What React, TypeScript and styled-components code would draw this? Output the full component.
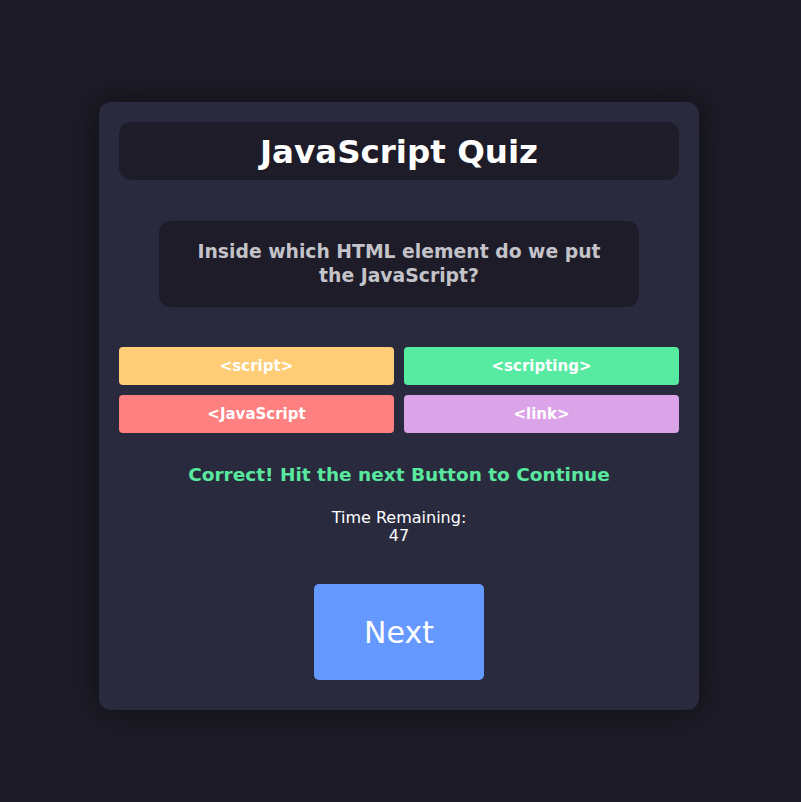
import React, { useState } from 'react';
import styled, { createGlobalStyle } from 'styled-components';

const GlobalStyle = createGlobalStyle`
  html, body {
    margin: 0;
    padding: 0;
    background: #1c1b26;
    font-family: "DejaVu Sans", Verdana, sans-serif;
  }
`;

const Page = styled.div`
  min-height: 802px;
  display: flex;
  justify-content: center;
  padding: 102px 3px 0 0;
  box-sizing: border-box;
`;

const Card = styled.div`
  width: 600px;
  height: 608px;
  box-sizing: border-box;
  padding: 20px 20px 30px;
  background: #292a3e;
  border-radius: 12px;
  box-shadow: 0 0 30px rgba(0, 0, 0, 0.45);
  display: flex;
  flex-direction: column;
  align-items: center;
`;

const TitleBox = styled.div`
  width: 100%;
  height: 58px;
  background: #1d1c28;
  border-radius: 12px;
  display: flex;
  align-items: center;
  justify-content: center;
`;

const Title = styled.h1`
  margin: 2px 0 0;
  font-size: 32.5px;
  font-weight: bold;
  color: #ffffff;
`;

const QuestionBox = styled.div`
  width: 480px;
  height: 86px;
  margin-top: 41px;
  box-sizing: border-box;
  padding: 0 20px;
  background: #1d1c28;
  border-radius: 12px;
  display: flex;
  align-items: center;
  justify-content: center;
  text-align: center;
  font-size: 18.8px;
  font-weight: bold;
  line-height: 24px;
  color: #c3c3c9;
`;

const Answers = styled.div`
  width: 100%;
  margin-top: 40px;
  display: grid;
  grid-template-columns: 1fr 1fr;
  gap: 10px;
`;

const AnswerButton = styled.button<{ $bg: string }>`
  height: 38px;
  border: none;
  border-radius: 4px;
  background: ${(p) => p.$bg};
  color: #ffffff;
  font-family: inherit;
  font-size: 15px;
  font-weight: bold;
  cursor: pointer;
`;

const Feedback = styled.p`
  margin: 31px 0 0;
  font-size: 18.5px;
  font-weight: bold;
  color: #58e89e;
`;

const Timer = styled.div`
  margin-top: 24px;
  font-size: 16px;
  line-height: 18px;
  color: #ffffff;
  text-align: center;
`;

const NextButton = styled.button`
  margin-top: 39px;
  width: 170px;
  height: 96px;
  border: none;
  border-radius: 5px;
  background: #6699ff;
  color: #ffffff;
  font-family: inherit;
  font-size: 30px;
  cursor: pointer;
`;

const answers = [
  { text: '<script>', color: '#fecd75' },
  { text: '<scripting>', color: '#57eaa1' },
  { text: '<JavaScript', color: '#ff8080' },
  { text: '<link>', color: '#dca4e8' },
];

export default function App() {
  const [time] = useState(47);
  return (
    <>
      <GlobalStyle />
      <Page>
        <Card>
          <TitleBox>
            <Title>JavaScript Quiz</Title>
          </TitleBox>
          <QuestionBox>Inside which HTML element do we put the JavaScript?</QuestionBox>
          <Answers>
            {answers.map((a) => (
              <AnswerButton key={a.text} $bg={a.color}>
                {a.text}
              </AnswerButton>
            ))}
          </Answers>
          <Feedback>Correct! Hit the next Button to Continue</Feedback>
          <Timer>
            Time Remaining:
            <br />
            {time}
          </Timer>
          <NextButton>Next</NextButton>
        </Card>
      </Page>
    </>
  );
}
